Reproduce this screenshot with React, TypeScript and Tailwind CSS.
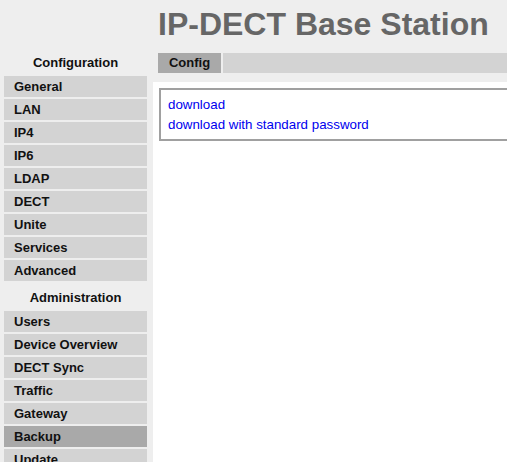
const configItems = ['General', 'LAN', 'IP4', 'IP6', 'LDAP', 'DECT', 'Unite', 'Services', 'Advanced'];
const adminItems = ['Users', 'Device Overview', 'DECT Sync', 'Traffic', 'Gateway', 'Backup', 'Update'];

function NavGroup({ title, items, active }: { title: string; items: string[]; active?: string }) {
  return (
    <div>
      <div className="h-[26px] flex items-center justify-center text-[13px] font-bold text-[#111]">{title}</div>
      <div className="flex flex-col gap-[2px]">
        {items.map((item) => (
          <div
            key={item}
            className={`h-[21px] pl-[10px] flex items-center text-[13px] font-bold text-[#111] ${
              item === active ? 'bg-[#a9a9a9]' : 'bg-[#d3d3d3]'
            }`}
          >
            {item}
          </div>
        ))}
      </div>
    </div>
  );
}

export default function App() {
  return (
    <div className="w-[507px] h-[462px] overflow-hidden bg-[#eeeeee] font-['Liberation_Sans',Arial,sans-serif] flex flex-col">
      <div className="h-[50px] pl-[158px] pt-[6px] text-[32px] font-bold text-[#666666] leading-[36px] whitespace-nowrap">
        IP-DECT Base Station
      </div>
      <div className="flex flex-1 min-h-0">
        <div className="w-[153px] shrink-0 pl-[4px] pr-[6px] flex flex-col gap-[4px]">
          <NavGroup title="Configuration" items={configItems} />
          <NavGroup title="Administration" items={adminItems} active="Backup" />
        </div>
        <div className="flex-1 min-w-0 flex flex-col">
          <div className="flex gap-[2px] h-[20px] mt-[3px] ml-[5px]">
            <div className="w-[63px] bg-[#a9a9a9] flex items-center justify-center text-[13px] font-bold text-[#111]">Config</div>
            <div className="flex-1 bg-[#d3d3d3]" />
          </div>
          <div className="flex-1 bg-white mt-[9px] pt-[6px] pl-[6px]">
            <div className="border-2 border-[#a0a0a0] border-r-0 h-[53px] pl-[7px] pt-[5px] flex flex-col text-[13.33px] leading-[20px] text-[#0000ee]">
              <a href="#" className="w-fit">download</a>
              <a href="#" className="w-fit">download with standard password</a>
            </div>
          </div>
        </div>
      </div>
    </div>
  );
}
